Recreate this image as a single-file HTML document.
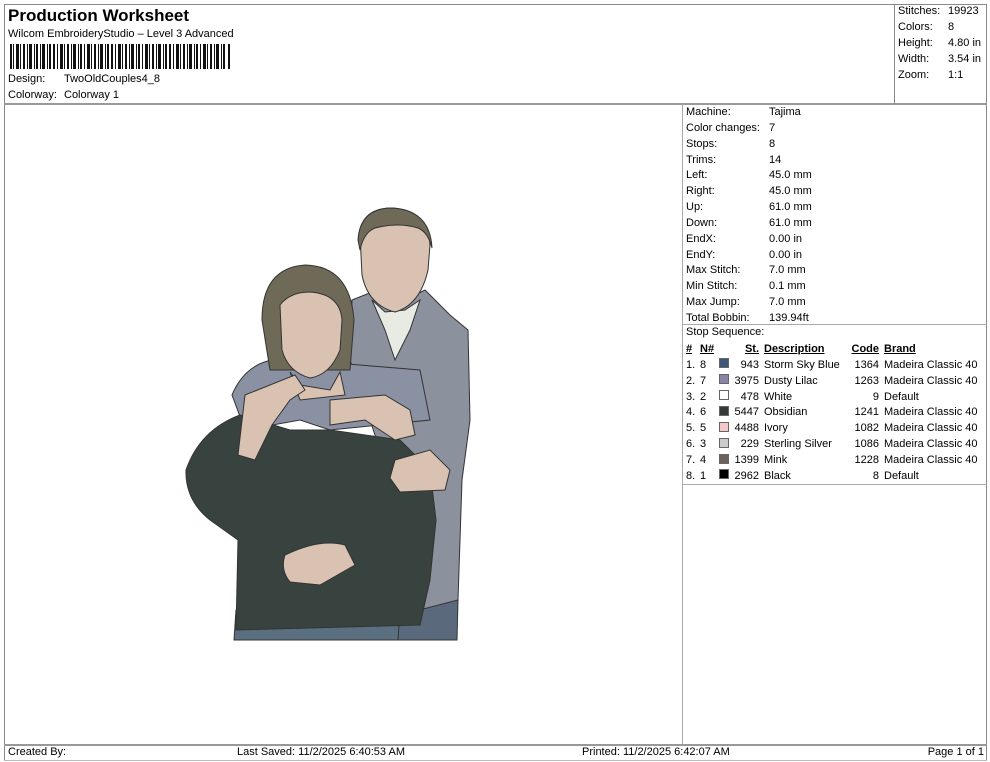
<!DOCTYPE html>
<html><head><meta charset="utf-8"><style>
*{margin:0;padding:0;box-sizing:border-box}
body{width:990px;height:762px;background:#fff;position:relative;font-family:"Liberation Sans",Arial,sans-serif;font-size:11px;color:#000;overflow:hidden}
.a{position:absolute;white-space:nowrap;line-height:13px}
.ln{position:absolute;background:#888}
.r{text-align:right}
u{text-decoration:underline}
.sw{position:absolute;width:10px;height:10px;border:1px solid #666}
</style></head><body>
<div class="ln" style="left:4px;top:4px;width:983px;height:1px"></div>
<div class="ln" style="left:4px;top:4px;width:1px;height:757px"></div>
<div class="ln" style="left:986px;top:4px;width:1px;height:757px"></div>
<div class="ln" style="left:4px;top:103px;width:983px;height:2px;background:#999"></div>
<div class="ln" style="left:894px;top:4px;width:1px;height:100px"></div>
<div class="ln" style="left:682px;top:104px;width:1px;height:640px;background:#aaa"></div>
<div class="ln" style="left:682px;top:324px;width:305px;height:1px;background:#aaa"></div>
<div class="ln" style="left:682px;top:484px;width:305px;height:1px;background:#aaa"></div>
<div class="ln" style="left:4px;top:744px;width:983px;height:2px;background:#999"></div>
<div class="ln" style="left:4px;top:760px;width:983px;height:1px;background:#bbb"></div>

<div class="a" style="left:8px;top:6px;font-size:17px;font-weight:bold;line-height:20px">Production Worksheet</div>
<div class="a" style="left:8px;top:28px">Wilcom EmbroideryStudio – Level 3 Advanced</div>
<svg class="a" style="left:10px;top:44px" width="222" height="25">
<g fill="#111">
<rect x="0" width="2" height="25"/><rect x="3" width="1" height="25"/><rect x="6" width="3" height="25"/><rect x="10" width="1" height="25"/><rect x="13" width="2" height="25"/><rect x="17" width="1" height="25"/><rect x="19" width="3" height="25"/><rect x="24" width="1" height="25"/><rect x="26" width="2" height="25"/><rect x="30" width="1" height="25"/><rect x="32" width="3" height="25"/><rect x="37" width="1" height="25"/><rect x="39" width="2" height="25"/><rect x="43" width="2" height="25"/><rect x="47" width="1" height="25"/><rect x="50" width="3" height="25"/><rect x="54" width="1" height="25"/><rect x="57" width="2" height="25"/><rect x="61" width="1" height="25"/><rect x="63" width="3" height="25"/><rect x="68" width="1" height="25"/><rect x="70" width="2" height="25"/><rect x="74" width="1" height="25"/><rect x="77" width="3" height="25"/><rect x="81" width="1" height="25"/><rect x="84" width="2" height="25"/><rect x="88" width="1" height="25"/><rect x="90" width="3" height="25"/><rect x="95" width="1" height="25"/><rect x="97" width="2" height="25"/><rect x="101" width="2" height="25"/><rect x="105" width="1" height="25"/><rect x="108" width="3" height="25"/><rect x="112" width="1" height="25"/><rect x="115" width="2" height="25"/><rect x="119" width="1" height="25"/><rect x="121" width="3" height="25"/><rect x="126" width="1" height="25"/><rect x="128" width="2" height="25"/><rect x="132" width="1" height="25"/><rect x="135" width="3" height="25"/><rect x="139" width="1" height="25"/><rect x="142" width="2" height="25"/><rect x="146" width="1" height="25"/><rect x="148" width="3" height="25"/><rect x="153" width="1" height="25"/><rect x="155" width="2" height="25"/><rect x="159" width="2" height="25"/><rect x="163" width="1" height="25"/><rect x="166" width="3" height="25"/><rect x="170" width="1" height="25"/><rect x="173" width="2" height="25"/><rect x="177" width="1" height="25"/><rect x="179" width="3" height="25"/><rect x="184" width="1" height="25"/><rect x="186" width="2" height="25"/><rect x="190" width="1" height="25"/><rect x="193" width="3" height="25"/><rect x="197" width="1" height="25"/><rect x="200" width="2" height="25"/><rect x="204" width="1" height="25"/><rect x="206" width="3" height="25"/><rect x="211" width="1" height="25"/><rect x="213" width="2" height="25"/><rect x="218" width="2" height="25"/>
</g></svg>
<div class="a" style="left:8px;top:73px">Design:</div><div class="a" style="left:64px;top:73px">TwoOldCouples4_8</div>
<div class="a" style="left:8px;top:89px">Colorway:</div><div class="a" style="left:64px;top:89px">Colorway 1</div>

<div class="a" style="left:898px;top:5px">Stitches:</div><div class="a" style="left:948px;top:5px">19923</div>
<div class="a" style="left:898px;top:21px">Colors:</div><div class="a" style="left:948px;top:21px">8</div>
<div class="a" style="left:898px;top:37px">Height:</div><div class="a" style="left:948px;top:37px">4.80 in</div>
<div class="a" style="left:898px;top:53px">Width:</div><div class="a" style="left:948px;top:53px">3.54 in</div>
<div class="a" style="left:898px;top:69px">Zoom:</div><div class="a" style="left:948px;top:69px">1:1</div>

<div class="a" style="left:686px;top:105px;line-height:15.85px">Machine:<br>Color changes:<br>Stops:<br>Trims:<br>Left:<br>Right:<br>Up:<br>Down:<br>EndX:<br>EndY:<br>Max Stitch:<br>Min Stitch:<br>Max Jump:<br>Total Bobbin:</div>
<div class="a" style="left:769px;top:105px;line-height:15.85px">Tajima<br>7<br>8<br>14<br>45.0 mm<br>45.0 mm<br>61.0 mm<br>61.0 mm<br>0.00 in<br>0.00 in<br>7.0 mm<br>0.1 mm<br>7.0 mm<br>139.94ft</div>

<div class="a" style="left:686px;top:326px">Stop Sequence:</div>
<div class="a" style="left:686px;top:342px;line-height:15.85px"><b><u>#</u></b><br>1.<br>2.<br>3.<br>4.<br>5.<br>6.<br>7.<br>8.</div>
<div class="a" style="left:700px;top:342px;line-height:15.85px"><b><u>N#</u></b><br>8<br>7<br>2<br>6<br>5<br>3<br>4<br>1</div>
<div class="sw" style="left:719px;top:358px;background:#3f5878"></div>
<div class="sw" style="left:719px;top:374px;background:#8c84a8"></div>
<div class="sw" style="left:719px;top:390px;background:#fff"></div>
<div class="sw" style="left:719px;top:406px;background:#333a38"></div>
<div class="sw" style="left:719px;top:422px;background:#f4c8c8"></div>
<div class="sw" style="left:719px;top:438px;background:#ccc"></div>
<div class="sw" style="left:719px;top:454px;background:#6a625a"></div>
<div class="sw" style="left:719px;top:469px;background:#000"></div>
<div class="a r" style="left:720px;width:39px;top:342px;line-height:15.85px"><b><u>St.</u></b><br>943<br>3975<br>478<br>5447<br>4488<br>229<br>1399<br>2962</div>
<div class="a" style="left:764px;top:342px;line-height:15.85px"><b><u>Description</u></b><br>Storm Sky Blue<br>Dusty Lilac<br>White<br>Obsidian<br>Ivory<br>Sterling Silver<br>Mink<br>Black</div>
<div class="a r" style="left:840px;width:39px;top:342px;line-height:15.85px"><b><u>Code</u></b><br>1364<br>1263<br>9<br>1241<br>1082<br>1086<br>1228<br>8</div>
<div class="a" style="left:884px;top:342px;line-height:15.85px"><b><u>Brand</u></b><br>Madeira Classic 40<br>Madeira Classic 40<br>Default<br>Madeira Classic 40<br>Madeira Classic 40<br>Madeira Classic 40<br>Madeira Classic 40<br>Default</div>

<div class="a" style="left:8px;top:746px">Created By:</div>
<div class="a" style="left:237px;top:746px">Last Saved: 11/2/2025 6:40:53 AM</div>
<div class="a" style="left:582px;top:746px">Printed: 11/2/2025 6:42:07 AM</div>
<div class="a r" style="left:880px;width:104px;top:746px">Page 1 of 1</div>

<svg class="a" style="left:0;top:0" width="682" height="744" viewBox="0 0 682 744">
<g stroke="#333" stroke-width="1">
<path d="M395 600 L458 600 L457 640 L395 640Z" fill="#5a6a7c"/>
<path d="M352 300 L372 292 L405 300 L425 290 L450 315 L468 330 L470 420 L462 480 L458 600 L400 615 L395 560 L380 450 L350 360Z" fill="#8c919e"/>
<path d="M372 300 L385 330 L395 360 L410 330 L420 300 L405 310 L385 312Z" fill="#e8ebe4"/>
<path d="M360 235 Q362 208 392 208 Q428 210 430 245 L428 270 Q420 305 395 312 Q368 305 362 275Z" fill="#d9c2b2"/>
<path d="M358 240 Q360 208 392 208 Q430 210 432 248 Q428 232 418 228 Q398 222 375 228 Q364 232 360 250Z" fill="#6f6a58"/>
<path d="M236 610 L400 610 L398 640 L234 640Z" fill="#5a6f80"/>
<path d="M232 395 Q250 352 300 360 L420 370 L430 420 L330 430 L300 420 L245 430Z" fill="#8a91a2"/>
<path d="M186 470 Q200 430 240 415 L290 430 L330 430 L400 440 L430 470 L436 520 L430 580 L420 625 L236 630 L238 540 L210 520 Q185 500 186 470Z" fill="#38433f"/>
<path d="M262 320 Q262 268 305 265 Q350 266 354 320 L350 370 L270 370Z" fill="#6f6a58"/>
<path d="M280 305 Q290 292 310 292 Q340 294 342 320 L340 350 Q330 375 310 378 Q288 372 282 350Z" fill="#d9c2b2"/>
<path d="M290 372 L300 385 L330 390 L340 372 L345 395 L300 400Z" fill="#d9c2b2"/>
<path d="M245 395 L295 375 L305 390 L290 400 L272 425 L255 460 L238 455Z" fill="#d9c2b2"/>
<path d="M330 400 L385 395 L410 410 L415 435 L395 440 L365 420 L330 425Z" fill="#d9c2b2"/>
<path d="M395 460 L430 450 L450 470 L445 490 L400 492 L390 478Z" fill="#d9c2b2"/>
<path d="M285 555 Q320 538 345 545 L355 565 L320 585 L290 582 Q280 570 285 555Z" fill="#d9c2b2"/>
</g>
</svg>
</body></html>
